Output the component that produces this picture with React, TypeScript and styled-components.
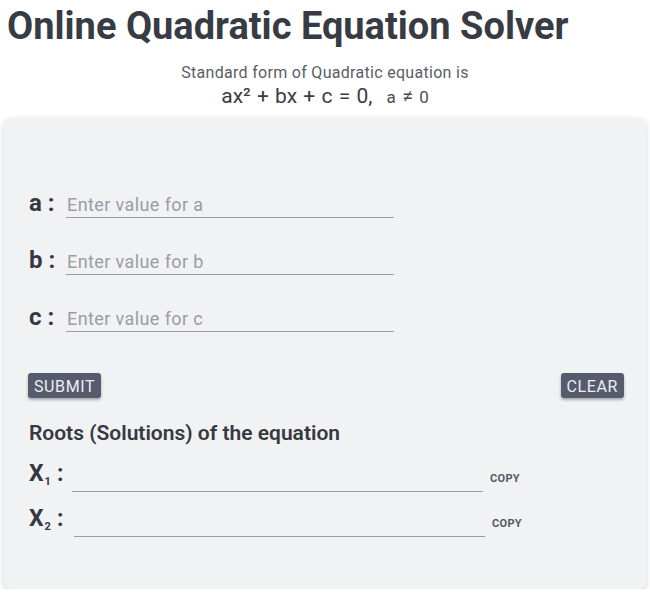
import React from 'react';
import styled, { createGlobalStyle } from 'styled-components';

const GlobalStyle = createGlobalStyle`
  body {
    margin: 0;
    background: #ffffff;
    font-family: Roboto, "Liberation Sans", sans-serif;
    color: #333740;
  }
`;

const roots = [
  { name: 'x1', sub: '1' },
  { name: 'x2', sub: '2' },
];

const coefficients = ['a', 'b', 'c'];

export default function App() {
  return (
    <>
      <GlobalStyle />
      <Page>
        <Title>Online Quadratic Equation Solver</Title>
        <Intro>
          <IntroLine>Standard form of Quadratic equation is</IntroLine>
          <Formula>
            ax² + bx + c = 0, <Cond>a <Neq>≠</Neq> 0</Cond>
          </Formula>
        </Intro>
        <Card>
          <Fields>
            {coefficients.map(c => (
              <FieldRow key={c}>
                <Label>{c} :</Label>
                <Input placeholder={`Enter value for ${c}`} />
              </FieldRow>
            ))}
          </Fields>
          <Actions>
            <Button>SUBMIT</Button>
            <Button>CLEAR</Button>
          </Actions>
          <Heading>Roots (Solutions) of the equation</Heading>
          <Roots>
            {roots.map((r, i) => (
              <RootRow key={r.name}>
                <RootLabel>
                  X<Sub>{r.sub}</Sub>:
                </RootLabel>
                <RootInput readOnly $shift={i * 2} />
                <CopyButton>COPY</CopyButton>
              </RootRow>
            ))}
          </Roots>
        </Card>
      </Page>
    </>
  );
}

const Page = styled.div`
  padding: 0 4px;
  width: 642px;
`;

const Title = styled.h1`
  margin: 0;
  padding: 5px 0 0 3px;
  font-size: 38px;
  font-weight: 700;
  line-height: 42px;
  color: #373b44;
`;

const Intro = styled.div`
  display: flex;
  flex-direction: column;
  align-items: center;
  margin-top: 16px;
`;

const IntroLine = styled.div`
  font-size: 16px;
  line-height: 20px;
  letter-spacing: 0.3px;
  color: #5a5e66;
`;

const Formula = styled.div`
  font-size: 21px;
  line-height: 26px;
  color: #3a3d44;
  word-spacing: 1px;
`;

const Cond = styled.span`
  font-size: 17px;
  margin-left: 8px;
  color: #4a4d55;
`;

const Neq = styled.span`
  font-size: 20px;
  margin: 0 1px;
`;

const Card = styled.div`
  margin-top: 8px;
  background: #f1f2f4;
  border-radius: 7px;
  box-shadow: 0 2px 6px rgba(0, 0, 0, 0.18);
  padding: 71px 22px 52px 25px;
`;

const Fields = styled.div`
  display: flex;
  flex-direction: column;
  gap: 28px;
`;

const FieldRow = styled.div`
  display: flex;
  align-items: flex-end;
  gap: 8px;
`;

const Label = styled.span`
  font-size: 24px;
  font-weight: 700;
  line-height: 29px;
  width: 29px;
  white-space: nowrap;
  color: #353840;
`;

const Input = styled.input`
  width: 328px;
  height: 29px;
  box-sizing: border-box;
  border: none;
  border-bottom: 1px solid #9a9ca2;
  background: transparent;
  font-family: inherit;
  font-size: 18px;
  letter-spacing: 0.4px;
  padding: 2px 0 0 1px;
  outline: none;
  &::placeholder {
    color: #9a9da4;
  }
`;

const Actions = styled.div`
  display: flex;
  justify-content: space-between;
  margin: 41px 0 0 -1px;
`;

const Button = styled.button`
  background: #565c6e;
  color: #eceef4;
  border: none;
  border-radius: 3px;
  height: 25px;
  padding: 2px 6px 0;
  font-family: inherit;
  font-size: 16px;
  letter-spacing: 0.6px;
  box-shadow: 0 2px 3px rgba(0, 0, 0, 0.3);
`;

const Heading = styled.h2`
  margin: 21px 0 0 0;
  font-size: 21px;
  font-weight: 600;
  line-height: 28px;
  color: #363940;
`;

const Roots = styled.div`
  display: flex;
  flex-direction: column;
  gap: 16px;
  margin-top: 16px;
`;

const RootRow = styled.div`
  display: flex;
  align-items: flex-end;
`;

const RootLabel = styled.span`
  font-size: 23px;
  font-weight: 700;
  line-height: 29px;
  height: 29px;
  width: 43px;
  white-space: nowrap;
  color: #353840;
  align-self: flex-start;
  margin-top: -4px;
`;

const Sub = styled.sub`
  font-size: 11px;
  line-height: 0;
  vertical-align: -4px;
  margin: 0 6px 0 1px;
`;

const RootInput = styled.input<{ $shift: number }>`
  width: 411px;
  height: 29px;
  margin-left: ${p => p.$shift}px;
  box-sizing: border-box;
  border: none;
  border-bottom: 1px solid #9a9ca2;
  background: transparent;
  outline: none;
`;

const CopyButton = styled.button`
  background: none;
  border: none;
  padding: 0 0 0 7px;
  margin-bottom: 7px;
  font-family: inherit;
  font-size: 11px;
  font-weight: 700;
  letter-spacing: 0.3px;
  color: #555963;
`;
